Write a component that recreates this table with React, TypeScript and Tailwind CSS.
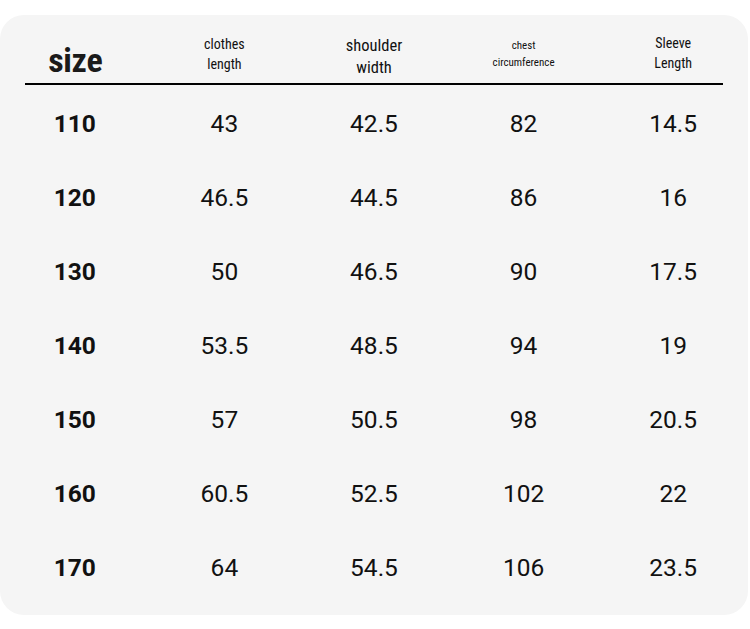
const rows = [
  ["110", "43", "42.5", "82", "14.5"],
  ["120", "46.5", "44.5", "86", "16"],
  ["130", "50", "46.5", "90", "17.5"],
  ["140", "53.5", "48.5", "94", "19"],
  ["150", "57", "50.5", "98", "20.5"],
  ["160", "60.5", "52.5", "102", "22"],
  ["170", "64", "54.5", "106", "23.5"],
]

const narrow = { fontFamily: '"Liberation Sans Narrow", "Roboto Condensed", Roboto, sans-serif' }

export default function App() {
  return (
    <div className="w-[750px] h-[629px] bg-white pt-[15px] font-['Roboto',sans-serif] text-[#111]">
      <div className="w-[748px] h-[600px] rounded-[24px] bg-[#f5f5f5]">
        {/* header */}
        <div className="grid grid-cols-5 h-[68px] text-center" style={narrow}>
          <div className="pt-[22px] pl-[1px] text-[34px] font-bold leading-[46px] tracking-[-0.3px] text-[#1a1a1a]">size</div>
          <div className="pt-[19px] text-[14px] leading-[20px]">clothes<br />length</div>
          <div className="pt-[20px] text-[16.5px] leading-[22px]">shoulder<br />width</div>
          <div className="pt-[22px] text-[11px] leading-[17px]">chest<br />circumference</div>
          <div className="pt-[18px] text-[14px] leading-[20px]">Sleeve<br />Length</div>
        </div>
        <div className="mx-[25px] h-[2px] bg-black" />
        {/* rows */}
        <div className="pt-[2px]">
          {rows.map((r) => (
            <div key={r[0]} className="grid grid-cols-5 h-[74px] items-center text-center text-[24.5px]">
              <div className="font-bold">{r[0]}</div>
              <div>{r[1]}</div>
              <div>{r[2]}</div>
              <div>{r[3]}</div>
              <div>{r[4]}</div>
            </div>
          ))}
        </div>
      </div>
    </div>
  )
}
